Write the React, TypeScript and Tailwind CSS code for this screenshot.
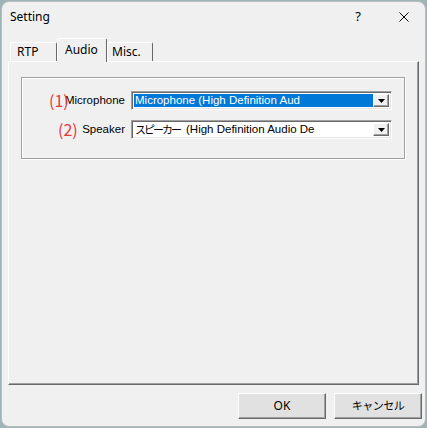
const raised =
  "border border-t-white border-l-white border-r-[#696969] border-b-[#696969] shadow-[inset_-1px_-1px_0_#a0a0a0]";

const gothic = "font-['Liberation_Sans','Noto_Sans_CJK_JP',sans-serif]";

function Combo({ text, selected }: { text: React.ReactNode; selected?: boolean }) {
  return (
    <div className="flex h-[19px] w-[261px] border border-t-[#a0a0a0] border-l-[#a0a0a0] border-r-white border-b-white bg-white shadow-[inset_1px_1px_0_#696969,inset_-1px_-1px_0_#e3e3e3] p-[2px]">
      <div
        className={
          "flex flex-1 items-center overflow-hidden whitespace-nowrap pl-px text-[11.5px] leading-none " +
          gothic +
          " " +
          (selected ? "bg-[#0078d7] text-white" : "text-black")
        }
      >
        {text}
      </div>
      <div className={"flex w-[16px] items-center justify-center bg-[#f0f0f0] " + raised}>
        <svg width="7" height="4" viewBox="0 0 7 4">
          <path d="M0 0h7L3.5 4z" fill="#000" />
        </svg>
      </div>
    </div>
  );
}

function Row({ mark, label, markLeft, children }: { mark: string; label: string; markLeft: string; children: React.ReactNode }) {
  return (
    <div className="relative flex items-center gap-[6px]">
      <span className={"w-[103px] text-right text-[11.5px] leading-[19px] " + gothic}>{label}</span>
      {children}
      <span className={"absolute top-0 text-[16px] leading-[19px] text-[#e5393c] font-['Noto_Sans_CJK_JP',sans-serif] " + markLeft}>
        {mark}
      </span>
    </div>
  );
}

function Tab({ label, active, className }: { label: string; active?: boolean; className: string }) {
  return (
    <div
      className={
        "flex items-center rounded-t-[2px] border border-b-0 border-t-white border-l-white border-r-[#696969] bg-[#f0f0f0] text-[12px] " +
        (active ? "relative z-10 -mb-px h-[24px] pb-px" : "h-[19px]") +
        " " +
        className
      }
    >
      {label}
    </div>
  );
}

export default function App() {
  return (
    <div className="h-[428px] w-[427px] bg-[#9fb4b7] p-px">
      <div className="flex h-full flex-col overflow-hidden rounded-[8px] border border-[#bcbcbc] bg-[#f0f0f0] font-['Noto_Sans','Noto_Sans_CJK_JP',sans-serif] text-black">
        {/* title bar */}
        <div className="flex h-[30px] shrink-0 items-center pl-[8px]">
          <span className="text-[12px]">Setting</span>
          <span className="ml-auto text-[13px]">?</span>
          <svg className="ml-[38px] mr-[16px]" width="10" height="10" viewBox="0 0 10 10">
            <path d="M0.5 0.5l9 9M9.5 0.5l-9 9" stroke="#000" strokeWidth="1" />
          </svg>
        </div>

        <div className="flex flex-col px-[6px] pt-[6px]">
          <div className="flex h-[23px] items-end pl-[2px]">
            <Tab label="RTP" className="w-[47px] pl-[6px]" />
            <Tab label="Audio" active className="w-[50px] pl-[7px]" />
            <Tab label="Misc." className="w-[46px] pl-[4px]" />
          </div>
          <div className="h-[324px] border border-t-white border-l-white border-r-[#696969] border-b-[#696969] shadow-[inset_-1px_-1px_0_#a0a0a0] bg-[#f0f0f0] pl-[12px] pt-[15px]">
            <div className="flex h-[82px] w-[384px] flex-col gap-[10px] border border-[#a0a0a0] shadow-[inset_1px_1px_0_#fff,1px_1px_0_#fff] pt-[13px]">
              <Row mark="(1)" label="Microphone" markLeft="left-[27px]">
                <Combo selected text="Microphone (High Definition Aud" />
              </Row>
              <Row mark="(2)" label="Speaker" markLeft="left-[36px]">
                <Combo
                  text={
                    <>
                      <span className="text-[11px] tracking-[-2px] font-['Noto_Sans_CJK_JP',sans-serif]">スピーカー</span>
                      <span className="ml-[6px]">(High Definition Audio De</span>
                    </>
                  }
                />
              </Row>
            </div>
          </div>
        </div>

        <div className="mt-[8px] flex justify-end gap-[8px] pr-[3px]">
          <button className={"h-[26px] w-[88px] bg-[#e1e1e1] text-[12px] " + raised}>OK</button>
          <button className={"h-[26px] w-[88px] bg-[#e1e1e1] text-[11px] tracking-[-0.5px] " + raised}>キャンセル</button>
        </div>
      </div>
    </div>
  );
}
